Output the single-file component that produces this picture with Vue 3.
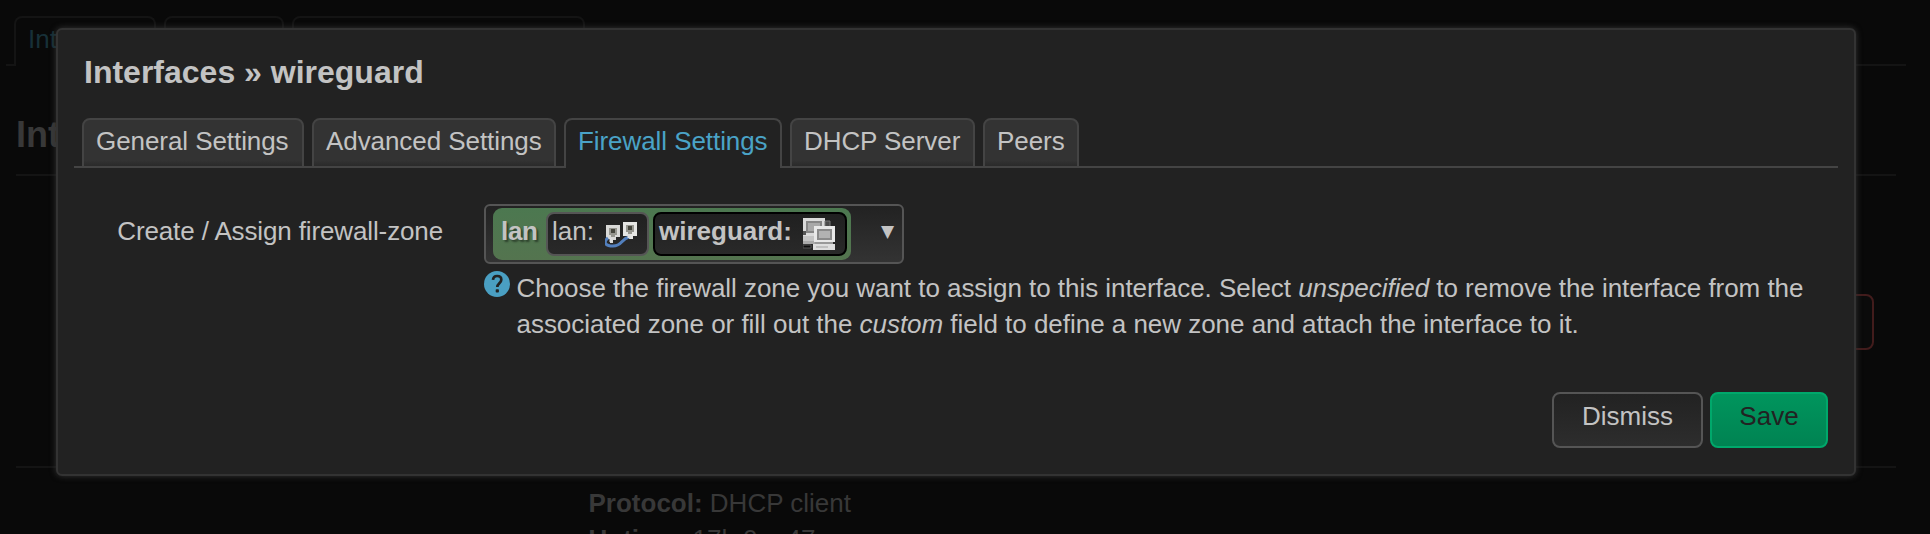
<script setup>
const pageTabs = ['Interfaces', 'Devices', 'Global network options']
const tabs = [
  { label: 'General Settings', w: 222 },
  { label: 'Advanced Settings', w: 244 },
  { label: 'Firewall Settings', w: 218, active: true },
  { label: 'DHCP Server', w: 185 },
  { label: 'Peers', w: 96 }
]
</script>

<template>
  <div class="screen">
    <div class="page">
      <ul class="page-tabs">
        <li v-for="(t, i) in pageTabs" :key="t" :class="['pt', 'pt' + i]"><span v-if="i === 0">Int</span></li>
        <li class="pt-rest"></li>
      </ul>
      <h2>Int</h2>
      <div class="row-first"><button class="remove" aria-label="Remove"></button></div>
      <div class="details">
        <div><b>Protocol:</b> DHCP client</div>
        <div><b>Uptime:</b> 17h 0m 47s</div>
      </div>
    </div>

    <div class="modal">
      <h4>Interfaces » wireguard</h4>
      <ul class="tabs">
        <li v-for="t in tabs" :key="t.label" class="tab" :class="{ active: t.active }" :style="{ width: t.w + 'px' }">{{ t.label }}</li>
        <li class="rest"></li>
      </ul>
      <div class="field">
        <label>Create / Assign firewall-zone</label>
        <div class="value">
          <div class="dropdown">
            <div class="zone">
              <b class="zname">lan</b>
              <span class="iface first">lan:
                <svg class="ico" viewBox="0 0 32 32">
                  <path d="M1 7h14v12h-4v3H8v3H5v-4H1z" fill="#d9d9d7" />
                  <path d="M18 4h14v14h-4v3h-4v-3h-6z" fill="#e6e6e4" />
                  <path d="M4 10h8v7h-2v2H6v-2H4z" fill="#96968f" />
                  <path d="M6 11h4v4H6z" fill="#45453c" />
                  <path d="M21 7h8v7h-2v2h-4v-2h-2z" fill="#96968f" />
                  <path d="M23 8h4v4h-4z" fill="#45453c" />
                  <path d="M3 20C-2 24 0 28 8 28c9 0 8-7 16-9" fill="none" stroke="#527fbd" stroke-width="3" />
                  <path d="M6 20v4M24 16v4" stroke="#dedede" stroke-width="3" />
                </svg>
              </span>
              <span class="iface current">wireguard:
                <svg class="ico" viewBox="0 0 32 32">
                  <path d="M0 0h22v18H0z" fill="#dadada" />
                  <path d="M4 4h14v10H4z" fill="#a8a8a8" stroke="#868686" stroke-width="2" />
                  <path d="M22 3h5v6h-5z" fill="#4c4c4c" stroke="#777" stroke-width="1" />
                  <path d="M0 13h3v4H0z" fill="#555" />
                  <path d="M0 18h12v5H0z" fill="#c4c4c4" />
                  <path d="M0 23h12v3H0z" fill="#a9a9a9" />
                  <path d="M0 27h8v3H0z" fill="#0d0d0d" stroke="#555" />
                  <path d="M11 8h21v16H11z" fill="#e8e8e8" />
                  <path d="M15 12h13v9H15z" fill="#b2b2b2" stroke="#8a8a8a" stroke-width="2" />
                  <path d="M12 24h18v2H12z" fill="#999" />
                  <path d="M10 26h22v6H10z" fill="#dedede" />
                  <path d="M13 29h12" stroke="#b6b6b6" stroke-width="1.5" />
                </svg>
              </span>
            </div>
            <span class="arrow">▼</span>
          </div>
          <div class="help">
            <svg class="q" viewBox="0 0 26 26">
              <circle cx="13" cy="13" r="13" fill="#4a9fc2" />
              <path d="M9 8.900C9.200 6.300 10.800 5 13.100 5c2.500 0 4.200 1.500 4.200 3.700 0 3.300-4 3.800-4 7.300" fill="none" stroke="#222" stroke-width="2.700" />
              <rect x="11.700" y="18.200" width="3.200" height="3.400" rx=".8" fill="#222" />
            </svg>
            <p><span class="l1">Choose the firewall zone you want to assign to this interface. Select <em>unspecified</em> to remove the interface from the</span><br>associated zone or fill out the <em>custom</em> field to define a new zone and attach the interface to it.</p>
          </div>
        </div>
      </div>
      <div class="actions">
        <button class="btn dismiss">Dismiss</button>
        <button class="btn save">Save</button>
      </div>
    </div>
  </div>
</template>

<style>
body { background: #090909; }
</style>

<style scoped>
* { box-sizing: border-box; }
.screen {
  position: relative;
  width: 1930px;
  height: 534px;
  overflow: hidden;
  background: #090909;
  color: #c3c3c3;
  font: 26px/36px "Liberation Sans", Arial, sans-serif;
}
ul { list-style: none; margin: 0; padding: 0; }
.page { color: #383838; }
.page-tabs { display: flex; height: 66px; padding: 16px 24px 0 6px; }
.pt { height: 50px; border: 2px solid #141414; border-radius: 8px 8px 0 0; margin-right: 8px; position: relative; }
.pt0 { width: 142px; margin-left: 8px; border-bottom: 0; color: #173038; padding: 3px 0 0 12px; }
.pt0::before { content: ""; position: absolute; left: -10px; bottom: 0; width: 8px; height: 2px; background: #141414; }
.pt1 { width: 120px; }
.pt2 { width: 293px; margin-right: 0; }
.pt-rest { flex: 1; border-bottom: 2px solid #141414; }
h2 { margin: 48px 34px 0 16px; height: 62px; border-bottom: 2px solid #141414; font-size: 36px; line-height: 42px; }
.row-first { height: 292px; margin: 0 34px 0 16px; border-bottom: 2px solid #141414; display: flex; justify-content: flex-end; align-items: flex-start; padding: 118px 22px 0 0; }
.remove { width: 110px; height: 56px; border: 2px solid #421c1c; border-radius: 8px; background: #0b0b0b; }
.details { padding: 17px 0 0 588.500px; }
.modal {
  position: absolute;
  left: 56px;
  top: 28px;
  width: 1800px;
  height: 448px;
  background: #222;
  border: 2px solid #333;
  border-radius: 6px;
  box-shadow: 0 0 6px #333;
  padding: 0 16px;
}
h4 { margin: 22px 0 0 10px; font-size: 32px; line-height: 40px; height: 66px; white-space: nowrap; }
.tabs { display: flex; height: 50px; }
.tabs::before { content: ""; width: 8px; border-bottom: 2px solid #444; }
.tab {
  position: relative;
  flex: none;
  margin-right: 8px;
  padding: 3px 0 0 12px;
  border: 2px solid #444;
  border-radius: 8px 8px 0 0;
  background: linear-gradient(#333 88%, #2a2a2a);
  white-space: nowrap;
  letter-spacing: -.07px;
}
.tab::after { content: ""; position: absolute; left: 100%; bottom: -2px; width: 12px; height: 2px; background: #444; }
.tab.active { background: #222; border-bottom: 0; color: #4aa3c7; }
.tab.active::after { bottom: 0; }
.rest { flex: 1; border-bottom: 2px solid #444; }
.field { display: flex; margin-top: 36px; }
label { width: 369px; text-align: right; padding-top: 9px; white-space: nowrap; letter-spacing: -.13px; }
.value { margin-left: 41px; }
.dropdown {
  width: 420px;
  height: 60px;
  border: 2px solid #555;
  border-radius: 6px;
  background: linear-gradient(#222, #333);
  display: flex;
  justify-content: space-between;
  padding: 2px 8px 0 7px;
}
.zone {
  width: 358px;
  height: 52px;
  border-radius: 9px;
  background: linear-gradient(#4c7850, #54744f);
  display: flex;
  gap: 4px;
  padding: 4px 4px 4px 8px;
}
.zname { width: 41px; text-shadow: 2px 2px 2px rgba(0, 0, 0, .45); line-height: 39px; letter-spacing: -.3px; }
.iface { display: flex; justify-content: space-between; height: 44px; border: 2px solid #555; border-radius: 8px; background: linear-gradient(#202020, #292929); padding: 0 10px 0 4px; line-height: 35px; white-space: nowrap; }
.first { width: 103px; }
.current { width: 194px; border-color: #000; font-weight: bold; }
.ico { width: 32px; height: 32px; margin-top: 4px; filter: blur(.6px); }
.arrow { font: 17px/46px "DejaVu Sans", sans-serif; }
.help { display: flex; align-items: flex-start; margin-top: 7px; height: 71px; }
.q { width: 26px; height: 26px; flex: none; }
p { margin: -1px 0 0 6.500px; white-space: nowrap; letter-spacing: -.03px; }
.l1 { letter-spacing: -.045px; }
.actions { display: flex; justify-content: flex-end; gap: 7px; margin: 50px 10px 0 0; }
.btn { height: 56px; padding: 0 0 8px; border: 2px solid #555; border-radius: 8px; font: inherit; color: #c3c3c3; background: linear-gradient(#222, #2d2d2d); }
.dismiss { width: 151px; }
.save { width: 118px; color: #222; border-color: #00a86b; background: linear-gradient(#00955d, #008352); }
</style>
